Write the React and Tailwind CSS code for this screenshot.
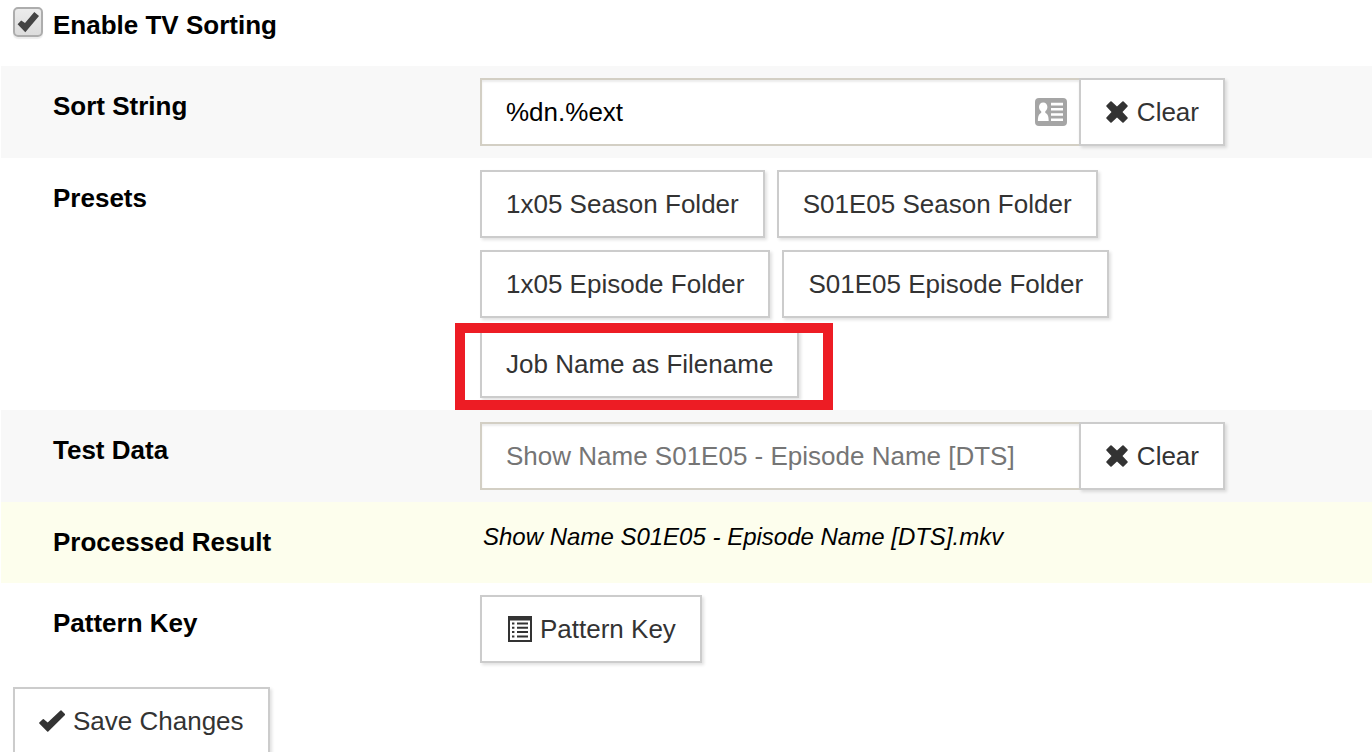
import { useState } from 'react';

const CrossIcon = () => (
  <svg viewBox="-1 0 24 22" className="w-6 h-[22px] shrink-0" fill="currentColor" aria-hidden="true">
    <path d="M5.600 .4 11 5.500 16.400 .4Q17 0 17.600 .4L21.600 4.400Q22 5 21.600 5.600L16.500 11 21.600 16.400Q22 17 21.600 17.600L17.600 21.600Q17 22 16.400 21.600L11 16.500 5.600 21.600Q5 22 4.400 21.600L.4 17.600Q0 17 .4 16.400L5.500 11 .4 5.600Q0 5 .4 4.400L4.400 .4Q5 0 5.600 .4Z" />
  </svg>
);

const CheckIcon = () => (
  <svg viewBox="0 0 26 22" className="w-[26px] h-[22px] shrink-0" fill="currentColor" aria-hidden="true">
    <path d="M21.500 .4Q22 0 22.500 .4L26 4Q26.500 4.600 26 5.100L9.300 21.600Q8.700 22 8.200 21.600L.3 13.400Q0 13 .3 12.500L3.800 9.200Q4.300 8.800 4.800 9.200L8.700 12.600Z" />
  </svg>
);

const ListIcon = () => (
  <svg viewBox="-2 0 26 26" className="w-[26px] h-[26px] shrink-0" fill="currentColor" aria-hidden="true">
    <path fillRule="evenodd" d="M0 0H24V26H0ZM2 4.500V24H22V4.500Z" />
    <path d="M4 6.500h2.400v2H4zM9 6.500h11v2H9zM4 10.800h2.400v2H4zM9 10.800h11v2H9zM4 15.100h2.400v2H4zM9 15.100h11v2H9zM4 19.400h2.400v2H4zM9 19.400h11v2H9z" />
  </svg>
);

const ContactIcon = () => (
  <svg viewBox="0 0 32 28" className="w-8 h-7" aria-hidden="true">
    <rect width="32" height="28" rx="4" fill="#a5a5a5" />
    <path fill="#fff" d="M8.200 4.600c2.500 0 4.200 1.900 4.200 4.500 0 1.900-.9 3.400-2.100 4.200v1.700c2.300.8 3.400 3 3.400 8H2.900c0-5 1.100-7.200 3.300-8v-1.700C4.900 12.500 4 11 4 9.100 4 6.500 5.700 4.600 8.200 4.600z" />
    <path fill="#fff" d="M16 4.800h12v2.600H16zM16 10h12v2.600H16zM16 15.200h12v2.600H16zM16 20.400h12v2.600H16z" />
  </svg>
);

const Button = ({ children, className = '', ...props }) => (
  <button
    type="button"
    className={`inline-flex items-center h-[68px] px-6 border-2 border-[#ccc] bg-white text-[#333] whitespace-nowrap shadow-[2px_2px_3px_rgba(0,0,0,0.12)] ${className}`}
    {...props}
  >
    {children}
  </button>
);

const Row = ({ label, htmlFor, className = '', children }) => (
  <div className={`flex items-start ml-px py-3 ${className}`}>
    {htmlFor ? (
      <label htmlFor={htmlFor} className="w-[479px] shrink-0 pl-[52px] pt-3 leading-8 font-bold">{label}</label>
    ) : (
      <div className="w-[479px] shrink-0 pl-[52px] pt-3 leading-8 font-bold">{label}</div>
    )}
    {children}
  </div>
);

const TextField = ({ id, value, onChange, onClear, placeholder, icon }) => (
  <div className="flex w-full max-w-[745px]">
    <div className="relative flex-1 min-w-0">
      <input
        id={id}
        type="text"
        value={value}
        placeholder={placeholder}
        onChange={(e) => onChange(e.target.value)}
        className="block w-full h-[68px] px-6 border-2 border-r-0 border-[#d3cfc4] bg-white text-black placeholder:text-[#757575] outline-none shadow-[inset_0_2px_2px_rgba(0,0,0,0.08)]"
      />
      {icon && <span className="absolute right-3 top-5">{icon}</span>}
    </div>
    <Button className="gap-2" onClick={onClear}>
      <CrossIcon /> Clear
    </Button>
  </div>
);

const presets = [
  { name: '1x05 Season Folder', pattern: '%sn/Season %s/%sn - %sx%0e - %en.%ext' },
  { name: 'S01E05 Season Folder', pattern: '%sn/Season %s/%sn - S%0sE%0e - %en.%ext' },
  { name: '1x05 Episode Folder', pattern: '%sn/%sx%0e - %en/%sn - %sx%0e - %en.%ext' },
  { name: 'S01E05 Episode Folder', pattern: '%sn/S%0sE%0e - %en/%sn - S%0sE%0e - %en.%ext' },
  { name: 'Job Name as Filename', pattern: '%dn.%ext', highlighted: true },
];

export default function App() {
  const [enabled, setEnabled] = useState(true);
  const [sortString, setSortString] = useState('%dn.%ext');
  const [testData, setTestData] = useState('');

  const sample = 'Show Name S01E05 - Episode Name [DTS]';

  return (
    <form
      className="bg-white text-black text-[26px] leading-8 font-['Liberation_Sans',Arial,sans-serif]"
      onSubmit={(e) => e.preventDefault()}
    >
      <div className="flex items-start h-[66px] pl-[13px] pt-[7px]">
        <label className="flex items-start gap-[10px] font-bold">
          <span className="relative">
            <input
              type="checkbox"
              checked={enabled}
              onChange={(e) => setEnabled(e.target.checked)}
              className="block appearance-none size-[30px] border-2 border-[#adadad] rounded-[5px] bg-linear-to-b from-[#ececec] to-[#dcdcdc] shadow-[0_2px_1px_rgba(0,0,0,0.08)]"
            />
            {enabled && (
              <svg viewBox="0 0 22 21" className="absolute left-1 top-[5px] w-[22px] h-[21px] text-[#444] pointer-events-none" fill="currentColor" aria-hidden="true">
                <path d="M17.300 0 22 4 8.300 20.300 .6 12.300 4.200 8.600 8 11Z" />
              </svg>
            )}
          </span>
          <span className="pt-[2px]">Enable TV Sorting</span>
        </label>
      </div>

      <Row label="Sort String" htmlFor="sort-string" className="bg-[#f8f8f8]">
        <TextField
          id="sort-string"
          value={sortString}
          onChange={setSortString}
          onClear={() => setSortString('')}
          icon={<ContactIcon />}
        />
      </Row>

      <Row label="Presets">
        <div className="flex flex-wrap gap-3 max-w-[745px]">
          {presets.map((preset) => (
            <div key={preset.name} className="relative">
              <Button onClick={() => setSortString(preset.pattern)}>{preset.name}</Button>
              {preset.highlighted && (
                <div className="absolute -top-[7px] -bottom-3 -left-[25px] -right-[34px] border-10 border-[#ed1c24] pointer-events-none" />
              )}
            </div>
          ))}
        </div>
      </Row>

      <Row label="Test Data" htmlFor="test-data" className="bg-[#f8f8f8]">
        <TextField
          id="test-data"
          value={testData}
          placeholder={sample}
          onChange={setTestData}
          onClear={() => setTestData('')}
        />
      </Row>

      <Row label="Processed Result" className="bg-[#fdfeed] min-h-[81px]">
        <output className="pl-[3px] pt-2 text-2xl leading-[30px] italic">{testData || sample}.mkv</output>
      </Row>

      <Row label="Pattern Key">
        <Button className="gap-2">
          <ListIcon /> Pattern Key
        </Button>
      </Row>

      <div className="pl-[13px] py-3">
        <Button type="submit" className="gap-2">
          <CheckIcon /> Save Changes
        </Button>
      </div>
    </form>
  );
}
